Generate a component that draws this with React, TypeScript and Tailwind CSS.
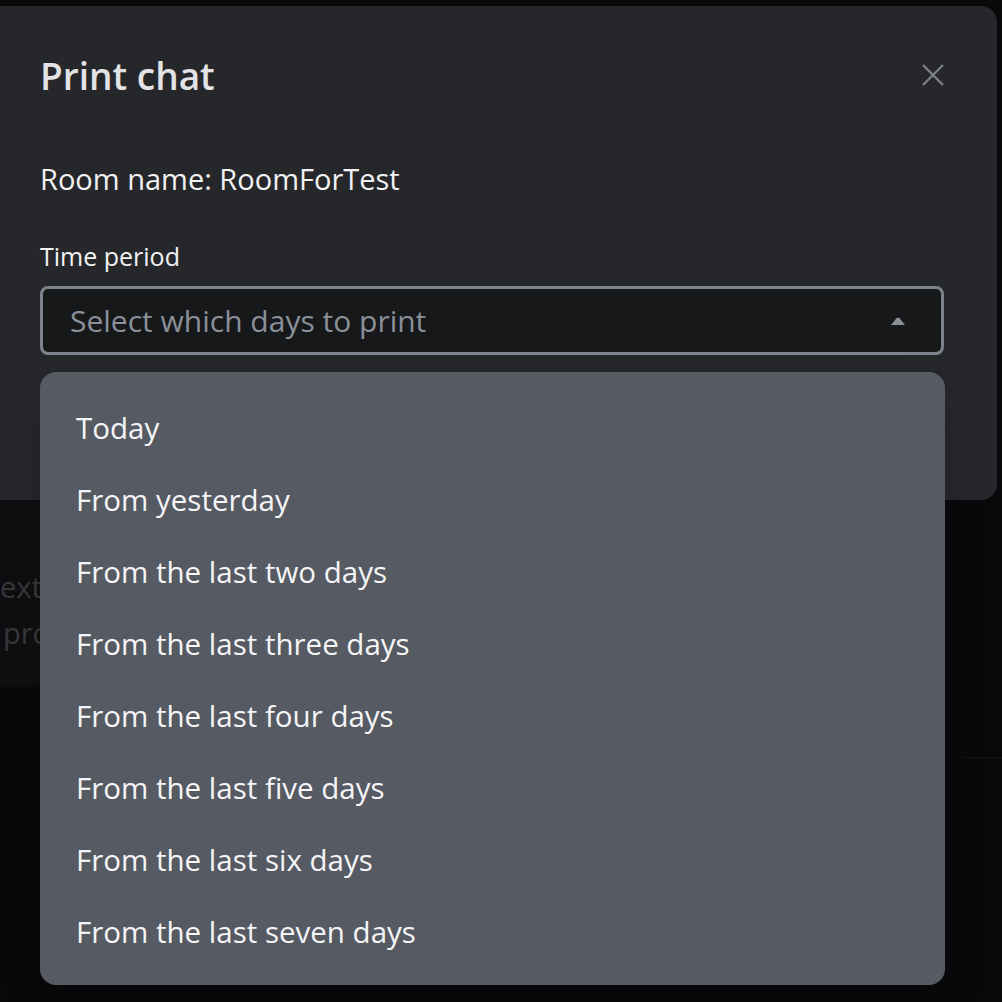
import React from 'react'

const periods = [
    'Today',
    'From yesterday',
    'From the last two days',
    'From the last three days',
    'From the last four days',
    'From the last five days',
    'From the last six days',
    'From the last seven days',
];

const font = { fontFamily: '"Open Sans", "Noto Sans", sans-serif' };

const App = () => {
    return (
        <div className="relative h-[1002px] w-full overflow-hidden bg-[#09090b]" style={font}>
            {/* Page behind the dialog */}
            <div className="pt-[500px]">
                <div className="h-[187px] w-[900px] bg-[#0f0f11] pt-[64px] text-[29px] leading-[46px] text-[#38383b]">
                    <p>ext</p>
                    <p className="ml-[3px]">pro</p>
                </div>
                <div className="h-[70px]" />
                <div className="ml-[963px] h-px bg-[#141416]" />
            </div>

            {/* Dialog */}
            <div className="absolute left-[-20px] top-[6px] h-[494px] w-[1017px] rounded-2xl bg-[#26272b] pl-[60px] pr-[55px] pt-[46px]">
                <div className="flex items-center justify-between">
                    <h2 className="text-[37px] font-semibold leading-[48px] text-[#e3e3e5]">Print chat</h2>
                    <button className="mb-[2px] mr-[-2px] text-[#7b7e84]">
                        <svg width="22" height="22" viewBox="0 0 22 22" fill="none" stroke="currentColor" strokeWidth="2.4">
                            <path d="M1 1 L21 21 M21 1 L1 21" />
                        </svg>
                    </button>
                </div>

                <p className="mt-[58px] text-[29px] leading-[42px] text-[#f2f2f3]">Room name: RoomForTest</p>

                <label className="mt-[38px] block text-[25px] leading-[36px] text-[#f2f2f3]">Time period</label>

                <div className="relative mt-[12px] w-[904px]">
                    <div className="flex h-[69px] items-center justify-between rounded-lg border-[3px] border-[#7d838c] bg-[#17181a] pl-[27px] pr-[35px]">
                        <span className="text-[30px] text-[#8a9099]">Select which days to print</span>
                        <svg width="16" height="10" viewBox="0 0 16 10" fill="#8b9099">
                            <path d="M8 1.5 Q8.8 1.5 9.5 2.3 L15 9 L1 9 L6.5 2.3 Q7.2 1.5 8 1.5 Z" />
                        </svg>
                    </div>

                    {/* Options menu */}
                    <ul className="absolute left-0 top-full z-10 mt-[17px] w-[905px] rounded-2xl bg-[#555a63] pb-[17px] pt-[20px] shadow-2xl">
                        {periods.map((p) => (
                            <li key={p} className="flex h-[72px] items-center pl-[36px] text-[29.5px] text-[#f5f5f6]">
                                {p}
                            </li>
                        ))}
                    </ul>
                </div>
            </div>
        </div>
    );
};

export default App
